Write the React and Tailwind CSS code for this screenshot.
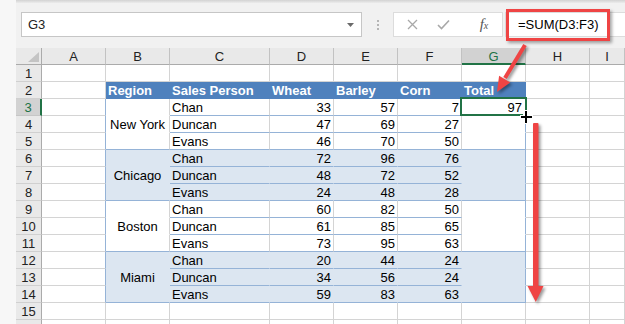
import React from 'react';

const COLW = ['w-[64px]', 'w-[64px]', 'w-[100px]', 'w-[64px]', 'w-[64px]', 'w-[64px]', 'w-[64px]', 'w-[64px]', 'flex-1'];
const LETTERS = ['A', 'B', 'C', 'D', 'E', 'F', 'G', 'H', 'I'];
const HEAD = ['Region', 'Sales Person', 'Wheat', 'Barley', 'Corn', 'Total'];
const REGIONS = ['New York', 'Chicago', 'Boston', 'Miami'];
const DATA = {
  3: ['Chan', 33, 57, 7],
  4: ['Duncan', 47, 69, 27],
  5: ['Evans', 46, 70, 50],
  6: ['Chan', 72, 96, 76],
  7: ['Duncan', 48, 72, 52],
  8: ['Evans', 24, 48, 28],
  9: ['Chan', 60, 82, 50],
  10: ['Duncan', 61, 85, 65],
  11: ['Evans', 73, 95, 63],
  12: ['Chan', 20, 44, 24],
  13: ['Duncan', 34, 56, 24],
  14: ['Evans', 59, 83, 63],
};

function cellSpec(r, c) {
  const s = {
    bg: 'bg-white',
    br: 'border-r-[#d4d4d4]',
    bb: 'border-b-[#d4d4d4]',
    text: '',
    align: 'text-left pl-[2px]',
    color: 'text-black',
  };
  if (r === 2 && c >= 1 && c <= 6) {
    s.bg = 'bg-[#4f81bd]';
    s.br = 'border-r-[#4f81bd]';
    s.bb = 'border-b-[#4f81bd]';
    s.text = HEAD[c - 1];
    s.color = 'text-white font-bold';
  }
  if (r >= 3 && r <= 14) {
    const k = r - 3;
    const block = Math.floor(k / 3);
    const pos = k % 3;
    const shaded = block % 2 === 1;
    const last = pos === 2;
    const bgc = shaded ? 'bg-[#dce6f1]' : 'bg-white';
    const bbSame = shaded ? 'border-b-[#dce6f1]' : 'border-b-white';
    const brGrid = shaded ? 'border-r-[#dce6f1]' : 'border-r-[#d4d4d4]';
    if (c === 0) {
      s.br = 'border-r-[#95b3d7]';
    } else if (c === 1) {
      s.bg = bgc;
      s.br = brGrid;
      s.bb = last ? 'border-b-[#95b3d7]' : bbSame;
      if (pos === 1) {
        s.text = REGIONS[block];
        s.align = 'text-center';
      }
    } else if (c >= 2 && c <= 5) {
      s.bg = bgc;
      s.br = brGrid;
      s.bb = 'border-b-[#95b3d7]';
      const row = DATA[r];
      s.text = c === 2 ? row[0] : String(row[c - 2]);
      s.align = c === 2 ? 'text-left pl-[2px]' : 'text-right pr-[2px]';
    } else if (c === 6) {
      s.bg = bgc;
      s.br = 'border-r-[#95b3d7]';
      s.bb = last ? 'border-b-[#95b3d7]' : bbSame;
      if (r === 3) {
        s.text = '97';
        s.align = 'text-right pr-[3px]';
      }
    }
  }
  return s;
}

function RowHead({ n }) {
  const sel = n === 3;
  return (
    <div
      className={
        sel
          ? 'w-[26px] shrink-0 h-full bg-[#d2d2d2] border-r-2 border-r-[#217346] border-b border-b-[#c6c6c6] text-[#217346] text-center leading-[15px] pt-px'
          : 'w-[26px] shrink-0 h-full bg-[#e9e9e9] border-r border-r-[#ababab] border-b border-b-[#d0d0d0] text-[#222] text-center leading-[15px] pt-px'
      }
    >
      {n}
    </div>
  );
}

function Row({ r }) {
  return (
    <div className="flex h-[17px] shrink-0">
      <RowHead n={r} />
      {LETTERS.map((_, c) => {
        const s = cellSpec(r, c);
        return (
          <div
            key={c}
            className={`${COLW[c]} shrink-0 h-full border-r border-b ${s.bg} ${s.br} ${s.bb} ${s.align} ${s.color} leading-[15px] pt-px whitespace-nowrap overflow-visible`}
          >
            {s.text}
          </div>
        );
      })}
    </div>
  );
}

function HeaderRow() {
  return (
    <div className="flex h-[17px] shrink-0">
      <div className="w-[26px] shrink-0 h-full bg-[#e9e9e9] border-r border-r-[#ababab] border-b border-b-[#ababab] flex items-end justify-end pr-[1px] pb-[2px]">
        <svg width="12" height="10" viewBox="0 0 12 10">
          <polygon points="11,0 11,10 0,10" fill="#c4c4c4" />
        </svg>
      </div>
      {LETTERS.map((l, c) => (
        <div
          key={l}
          className={
            c === 6
              ? `${COLW[c]} shrink-0 h-full bg-[#d2d2d2] border-r border-r-[#bdbdbd] border-b-2 border-b-[#217346] text-[#217346] text-center leading-[15px] pt-px`
              : `${COLW[c]} shrink-0 h-full bg-[#e9e9e9] border-r border-r-[#c2c2c2] border-b border-b-[#ababab] text-[#222] text-center leading-[15px] pt-px`
          }
        >
          {l}
        </div>
      ))}
    </div>
  );
}

function Toolbar() {
  return (
    <div className="h-[48px] shrink-0 bg-[#f1f1f1] flex flex-col">
      <div className="h-[3px] bg-gradient-to-b from-[#d2d2d2] to-[#ececec]" />
      <div className="flex h-[25px] mt-[9px] pl-[5px]">
        <div className="w-[341px] h-full bg-white border border-[#c6c6c6] flex items-center pl-[6px]">
          <span className="text-[#222]">G3</span>
          <svg className="ml-auto mr-[7px]" width="7" height="4" viewBox="0 0 7 4">
            <polygon points="0,0 7,0 3.5,4" fill="#6a6a6a" />
          </svg>
        </div>
        <div className="w-[31px] h-full flex flex-col items-center justify-center gap-[2px]">
          <div className="w-[2px] h-[2px] bg-[#b5b5b5]" />
          <div className="w-[2px] h-[2px] bg-[#b5b5b5]" />
          <div className="w-[2px] h-[2px] bg-[#b5b5b5]" />
        </div>
        <div className="w-[110px] h-full bg-white border border-[#dcdcdc] flex items-center">
          <div className="w-[30px] ml-[3px] flex justify-center">
            <svg width="11" height="11" viewBox="0 0 11 11">
              <path d="M1 1 L10 10 M10 1 L1 10" stroke="#a8a8a8" strokeWidth="1.3" fill="none" />
            </svg>
          </div>
          <div className="w-[30px] ml-[1px] flex justify-center">
            <svg width="13" height="11" viewBox="0 0 13 11">
              <path d="M1 6 L4.5 9.5 L12 1.5" stroke="#a8a8a8" strokeWidth="1.6" fill="none" />
            </svg>
          </div>
          <div className="w-[30px] ml-[11px] flex justify-center items-baseline font-['Liberation_Serif',serif] italic text-[#555]">
            <span className="text-[15px] leading-none">f</span>
            <span className="text-[10px] leading-none">x</span>
          </div>
        </div>
        <div className="flex-1 ml-[2px] h-full bg-white border border-r-0 border-[#dcdcdc] flex items-center pl-[12px] text-black">
          =SUM(D3:F3)
        </div>
      </div>
    </div>
  );
}

export default function App() {
  const rows = [];
  for (let r = 1; r <= 16; r++) rows.push(<Row key={r} r={r} />);
  return (
    <div className="relative w-[625px] h-[324px] overflow-hidden bg-[#f7f7f7] flex font-['Liberation_Sans',Arial,sans-serif] text-[13px]">
      <div className="w-[16px] shrink-0 bg-[#f7f7f7]" />
      <div className="flex-1 flex flex-col min-w-0">
        <Toolbar />
        <HeaderRow />
        {rows}
      </div>

      {/* selection */}
      <div className="absolute left-[460px] top-[97px] w-[67px] h-[19px] border-2 border-[#217346]" />
      <div className="absolute left-[523px] top-[112px] w-[6px] h-[6px] bg-[#217346] border border-white" />

      {/* annotation rectangle */}
      <div className="absolute left-[506px] top-[9px] w-[104px] h-[32px] border-[3px] border-[#ef4444] shadow-[2px_2px_3px_rgba(0,0,0,0.35)]" />

      {/* arrows & cursor */}
      <svg className="absolute left-0 top-0 pointer-events-none" width="625" height="324" viewBox="0 0 625 324">
        <g style={{ filter: 'drop-shadow(2px 2px 1.5px rgba(0,0,0,0.4))' }}>
          <line x1="525" y1="45" x2="505" y2="78" stroke="#ef4444" strokeWidth="4" />
          <polygon points="497,92 510.3,82.4 499.1,75.8" fill="#ef4444" />
          <rect x="533" y="123" width="5.5" height="165" fill="#ef4444" rx="1" />
          <polygon points="527.5,286 543.5,286 535.75,302" fill="#ef4444" />
        </g>
        <g>
          <rect x="520" y="115" width="13" height="4" fill="white" />
          <rect x="524" y="110" width="4" height="14" fill="white" />
          <rect x="521" y="116" width="11" height="2" fill="black" />
          <rect x="525" y="111" width="2" height="12" fill="black" />
        </g>
      </svg>
    </div>
  );
}
